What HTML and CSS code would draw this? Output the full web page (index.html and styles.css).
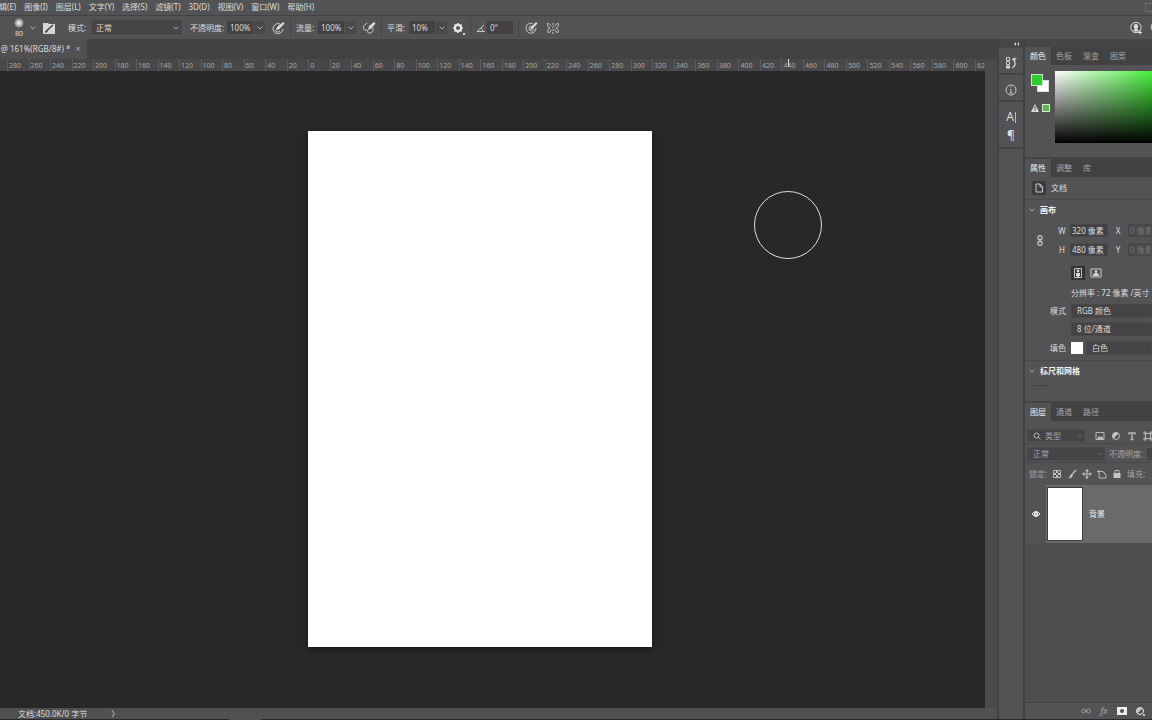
FILE: index.html
```html
<!DOCTYPE html>
<html lang="zh-CN">
<head>
<meta charset="utf-8">
<title>图像编辑器</title>
<link rel="stylesheet" href="styles.css">
</head>
<body>
<div class="app">
  <nav class="menubar">
    <button>编辑(E)</button><button>图像(I)</button><button>图层(L)</button><button>文字(Y)</button><button>选择(S)</button><button>滤镜(T)</button><button>3D(D)</button><button>视图(V)</button><button>窗口(W)</button><button>帮助(H)</button>
    <span class="window-box"></span>
  </nav>

  <div class="options">
    <button class="brush" aria-label="画笔"><span class="brush-dot"></span><span class="brush-size">80</span></button>
    <svg class="chev brush-chev" viewBox="0 0 8 8"><path d="M1.500 2.500 4 5 6.500 2.500"/></svg>
    <button class="icon brush-panel" aria-label="画笔设置"><svg viewBox="0 0 14 14"><path class="solid" d="M1 2h5l1 1h6v10H1z"/><path d="M3.500 11.500 6 8.500 11 4" stroke="#444" stroke-width="1.600"/><path d="M3 12l1-3 2 1z" fill="#444" stroke="none"/></svg></button>
    <label class="label mode-label" for="mode">模式:</label>
    <span class="select mode-select"><select id="mode"><option>正常</option></select><svg class="chev" viewBox="0 0 8 8"><path d="M1.500 2.500 4 5 6.500 2.500"/></svg></span>
    <label class="label opacity-label" for="opacity">不透明度:</label>
    <span class="num"><input id="opacity" value="100%"><button aria-label="不透明度选项"><svg class="chev" viewBox="0 0 8 8"><path d="M1.500 2.500 4 5 6.500 2.500"/></svg></button></span>
    <button class="icon after-num" aria-label="不透明度压力"><svg viewBox="0 0 14 14"><path d="M9 3a5 5 0 1 0 3 5M4 9a3 3 0 0 0 5 1"/><path class="solid" d="M5 9l1-3 6-5 1.500 1.500-5.500 6z"/></svg></button>
    <i class="sep"></i>
    <label class="label" for="flow">流量:</label>
    <span class="num"><input id="flow" value="100%"><button aria-label="流量选项"><svg class="chev" viewBox="0 0 8 8"><path d="M1.500 2.500 4 5 6.500 2.500"/></svg></button></span>
    <button class="icon after-num" aria-label="喷枪"><svg viewBox="0 0 14 14"><path d="M4 3C0 5 1 10 4 9s0 4 4 3 3-4 3-5M5 2 3 4"/><path class="solid" d="M6 9l1-4 5-4 1.500 1.500-4 5z"/></svg></button>
    <i class="sep"></i>
    <label class="label" for="smooth">平滑:</label>
    <span class="num"><input id="smooth" value="10%"><button aria-label="平滑选项"><svg class="chev" viewBox="0 0 8 8"><path d="M1.500 2.500 4 5 6.500 2.500"/></svg></button></span>
    <button class="icon gear" aria-label="平滑设置"><svg viewBox="0 0 14 14"><circle cx="7" cy="7" r="3" stroke="#eee" stroke-width="2"/><path d="M7 2v1.500M7 10.500v1.500M2 7h1.500M10.500 7H12M3.500 3.500l1 1M9.500 9.500l1 1M3.500 10.500l1-1M9.500 4.500l1-1" stroke="#eee" stroke-width="1.600"/><path class="solid" d="M12 12h2v2h-2z"/></svg></button>
    <i class="sep"></i>
    <label class="angle" for="angle" title="角度"><svg viewBox="0 0 10 10"><path d="M9 8.500H1L8 2M5 5q2 1 1.500 3.500"/></svg></label>
    <span class="num angle-num"><input id="angle" value="0°"></span>
    <i class="sep"></i>
    <button class="icon" aria-label="大小压力"><svg viewBox="0 0 14 14"><path d="M8.500 2.500A5 5 0 1 0 12 7M8 5a2.500 2.500 0 1 0 2 3"/><path class="solid" d="M6 8.500 7 6l5-5 1.500 1.500L8.500 8z"/></svg></button>
    <button class="icon symmetry" aria-label="对称"><svg viewBox="0 0 14 14"><path d="M7 2v11" stroke-dasharray="2 1"/><path d="M5 5C4 3 3 2.500 1.500 2.500c0 2.500.5 4 2.500 4.500-2 .5-2.500 2-2 4.500 2 0 3-1 3-3M9 5c1-2 2-2.500 3.500-2.500 0 2.500-.5 4-2.500 4.500 2 .5 2.500 2 2 4.500-2 0-3-1-3-3"/></svg></button>
    <span class="push"></span>
    <button class="icon" aria-label="分享"><svg viewBox="0 0 14 14"><circle cx="7" cy="6.500" r="5.200" stroke="#ddd"/><path class="solid" d="M7 3c3 0 2.500 4 1 5l2 1.500q-3 2.500-6 0L6 8C4.500 7 4 3 7 3z"/><path d="M9 11.500h4M11 9.500v4" stroke="#ddd"/></svg></button>
    <button class="icon search" aria-label="搜索"><svg viewBox="0 0 14 14"><circle cx="6" cy="6" r="4"/><path d="M9 9l4 4"/></svg></button>
  </div>

  <div class="workspace">
    <main class="document">
      <div class="doc-tabs"><div class="doc-tab"><span>1 @ 161%(RGB/8#) *</span><button aria-label="关闭">×</button></div></div>
      <div class="stage">
        <div class="view">
          <div class="ruler">
            <span>280</span><span>260</span><span>240</span><span>220</span><span>200</span><span>180</span><span>160</span><span>140</span><span>120</span><span>100</span><span>80</span><span>60</span><span>40</span><span>20</span><span>0</span><span>20</span><span>40</span><span>60</span><span>80</span><span>100</span><span>120</span><span>140</span><span>160</span><span>180</span><span>200</span><span>220</span><span>240</span><span>260</span><span>280</span><span>300</span><span>320</span><span>340</span><span>360</span><span>380</span><span>400</span><span>420</span><span>440</span><span>460</span><span>480</span><span>500</span><span>520</span><span>540</span><span>560</span><span>580</span><span>600</span><span>620</span>
            <i class="ruler-mark"></i>
          </div>
          <div class="canvas"><div class="artboard"></div><i class="cursor"></i></div>
        </div>
        <div class="scroll"></div>
      </div>
      <footer class="status"><span>文档:450.0K/0 字节</span><button aria-label="状态选项">〉</button></footer>
    </main>

    <aside class="strip">
      <button class="collapse" aria-label="展开面板"><svg viewBox="0 0 6 6"><path d="M3 1 1 3l2 2zM6 1 4 3l2 2z"/></svg></button>
      <div class="strip-group"><button aria-label="历史记录"><svg viewBox="0 0 14 14"><path d="M2.500 1.500h3v3h-3zM2.500 5.500h3v3h-3z"/><path class="solid" d="M2 9.500h4v3H2z"/><path d="M8 12q5-3 2-8" stroke-width="1.400"/><path class="solid" d="M7.500 3.500 11 1.500l.5 4z"/><path d="M10 2.500h2.500"/></svg></button></div>
      <div class="strip-group"><button aria-label="信息"><svg viewBox="0 0 14 14"><circle cx="7" cy="7" r="5"/><path d="M6 6.500h1v3.500M5.500 10h3M6.500 4h1" /></svg></button></div>
      <div class="strip-group tall"><button class="char" aria-label="字符">A<i></i></button><button class="char" aria-label="段落">¶</button></div>
      <div class="strip-rest"></div>
    </aside>

    <aside class="panels">
      <div class="panels-top"></div>
      <section class="panel">
        <div class="tabs"><button class="on">颜色</button><button>色板</button><button>渐变</button><button>图案</button></div>
        <div class="color-body">
          <div class="color-tools">
            <div class="swatches"><i class="back"></i><i class="fore"></i></div>
            <div class="warn"><svg viewBox="0 0 8 8"><path d="M4 0l4 8H0z" fill="#ddd"/><path d="M4 2.500v3M4 6v1" stroke="#444"/></svg><i></i></div>
          </div>
          <div class="spectrum"></div>
        </div>
      </section>

      <section class="panel">
        <div class="tabs"><button class="on">属性</button><button>调整</button><button>库</button></div>
        <div class="doc-row"><span class="doc-icon"><svg viewBox="0 0 10 10"><path d="M2 1h4l2.500 2.500V9H2zM6 1v3h2.500"/></svg></span>文档</div>
        <h2><svg class="chev" viewBox="0 0 8 8"><path d="M1.500 2.500 4 5 6.500 2.500"/></svg>画布</h2>
        <div class="size">
          <svg class="link" viewBox="0 0 8 12"><circle cx="4" cy="3.500" r="2"/><circle cx="4" cy="8.500" r="2"/><path d="M4 4v4"/></svg>
          <label for="w">W</label><input id="w" value="320 像素"><label for="x">X</label><input id="x" class="off" value="0 像素">
          <label for="h">H</label><input id="h" value="480 像素"><label for="y">Y</label><input id="y" class="off" value="0 像素">
        </div>
        <div class="orient"><button class="on" aria-label="纵向"><svg viewBox="0 0 12 12"><path d="M2.500 1.500h7v9h-7z"/><circle class="solid" cx="6" cy="4" r="1.400"/><path class="solid" d="M4 6h4v3H7v1H5V9H4z"/></svg></button><button aria-label="横向"><svg viewBox="0 0 12 12"><path d="M1 2h10v8H1z"/><circle class="solid" cx="6" cy="4.500" r="1.300"/><path class="solid" d="M3 9q0-3 3-3t3 3z"/></svg></button></div>
        <p class="resolution">分辨率 : 72 像素 /英寸</p>
        <div class="prop"><label for="cmode">模式</label><select id="cmode"><option>RGB 颜色</option></select></div>
        <div class="prop"><span></span><select aria-label="位深度"><option>8 位/通道</option></select></div>
        <div class="prop fill"><label for="fill">填色</label><i></i><select id="fill"><option>白色</option></select></div>
        <h2 class="grid-head"><svg class="chev" viewBox="0 0 8 8"><path d="M1.500 2.500 4 5 6.500 2.500"/></svg>标尺和网格</h2>
        <i class="cut"></i>
      </section>

      <section class="panel layers">
        <div class="tabs"><button class="on">图层</button><button>通道</button><button>路径</button></div>
        <div class="filter">
          <span class="select kind"><svg class="lens" viewBox="0 0 8 8"><circle cx="3.500" cy="3.500" r="2.500"/><path d="M5.500 5.500 7.500 7.500"/></svg><select aria-label="类型"><option>类型</option></select><svg class="chev" viewBox="0 0 8 8"><path d="M1.500 2.500 4 5 6.500 2.500"/></svg></span>
          <button aria-label="像素图层"><svg viewBox="0 0 10 10"><path d="M1 1.500h8v7H1z"/><path class="solid" d="M2 8l2-3 1.500 1.500L7 5l1.500 3z"/></svg></button>
          <button aria-label="调整图层"><svg viewBox="0 0 10 10"><circle cx="5" cy="5" r="3.500"/><path class="solid" d="M2.500 7.500 7.500 2.500A3.500 3.500 0 0 0 2.500 7.500z"/></svg></button>
          <button aria-label="文字图层"><svg viewBox="0 0 10 10"><path d="M2 3.500V2h6v1.500M5 2v6.500M3.500 8.500h3" stroke-width="1.400"/></svg></button>
          <button aria-label="形状图层"><svg viewBox="0 0 10 10"><path d="M2.500 2.500h5v5h-5zM1 1h2v2H1zM7 1h2v2H7zM1 7h2v2H1zM7 7h2v2H7z"/></svg></button>
        </div>
        <div class="blend"><span class="select"><select aria-label="混合模式"><option>正常</option></select><svg class="chev" viewBox="0 0 8 8"><path d="M1.500 2.500 4 5 6.500 2.500"/></svg></span><label for="lop">不透明度:</label><input id="lop"></div>
        <div class="locks">
          <span class="lock-label">锁定:</span>
          <button aria-label="锁定透明像素"><svg viewBox="0 0 10 10"><path d="M1.500 1.500h7v7h-7z"/><path class="solid" d="M4 2h2v2H4zM2 4h2v2H2zM6 4h2v2H6zM4 6h2v2H4z"/></svg></button>
          <button aria-label="锁定图像像素"><svg viewBox="0 0 10 10"><path d="M9 1 4.500 6" stroke-width="1.600"/><path class="solid" d="M4 5l2 2Q4 10 1 9q2-1 3-4z"/></svg></button>
          <button aria-label="锁定位置"><svg viewBox="0 0 10 10"><path d="M5 2v6M2 5h6"/><path class="solid" d="M5 0l2 2.500H3zM5 10 3 7.500h4zM0 5l2.500-2v4zM10 5 7.500 3v4z"/></svg></button>
          <button aria-label="锁定画板"><svg viewBox="0 0 10 10"><path d="M0 2.500h6L9 6v3H2V1M6 2.500 8 5"/></svg></button>
          <button aria-label="锁定全部"><svg viewBox="0 0 10 10"><path class="solid" d="M1.500 4h7v5h-7z"/><path d="M3 4V1.500h4V4"/></svg></button>
          <label for="lfill">填充:</label><input id="lfill">
        </div>
        <div class="layer">
          <button class="eye" aria-label="可见性"><svg viewBox="0 0 10 10"><path d="M1 5q4-5 8 0-4 5-8 0z"/><circle class="pupil" cx="5" cy="5" r="1.500"/></svg></button>
          <div class="layer-main"><i class="thumb"></i>背景</div>
        </div>
        <div class="layer-space"></div>
        <div class="layer-bar">
          <button class="dim" aria-label="链接图层"><svg viewBox="0 0 10 10"><circle cx="2.500" cy="5" r="2"/><circle cx="7.500" cy="5" r="2"/><path d="M3 5h4"/></svg></button>
          <button class="dim fx" aria-label="图层样式">fx</button>
          <button aria-label="添加蒙版"><svg viewBox="0 0 10 10"><path fill="#eee" fill-rule="evenodd" stroke="none" d="M0 1h10v8H0zM5 3a2 2 0 1 0 0 4 2 2 0 0 0 0-4z"/></svg></button>
          <button class="adjust" aria-label="调整图层"><svg viewBox="0 0 10 10"><circle cx="5" cy="5" r="3.500"/><path class="solid" d="M2.500 7.500 7.500 2.500A3.500 3.500 0 0 0 2.500 7.500zM8 8h2v2H8z"/></svg></button>
        </div>
      </section>
    </aside>
  </div>
  <div class="bottom-edge"><i></i></div>
</div>
</body>
</html>
```
FILE: styles.css
```css
* { box-sizing: border-box; }
body, h2, p { margin: 0; }
body {
  background: #535355;
  color: #dcdcdc;
  font: 8px/12px "Noto Sans", "Noto Sans CJK SC", sans-serif;
  overflow: hidden;
}
button, input, select {
  margin: 0;
  padding: 0;
  border: 0;
  border-radius: 0;
  background: none;
  color: inherit;
  font: inherit;
  appearance: none;
  min-width: 0;
}
button { display: flex; align-items: center; justify-content: center; white-space: nowrap; }
svg { display: block; fill: none; stroke: #c9c9c9; stroke-width: 1; width: 10px; height: 10px; flex: none; }
svg .solid { fill: #d8d8d8; stroke: none; }
.chev { width: 8px; height: 8px; stroke: #aaa; }
i { display: block; flex: none; }

.app { display: grid; grid-template-rows: 15px 24px minmax(0, 1fr) 1px; height: 100vh; overflow: hidden; }

.menubar { display: flex; align-items: center; gap: 8px; height: 14px; margin-left: -9px; overflow: hidden; }
.menubar button { flex: none; }
.window-box { flex: none; width: 7px; height: 9px; margin-left: auto; border: 1px solid #6d6d6f; border-right: 0; }

.options { display: flex; align-items: center; border-top: 1px solid #424244; padding-left: 12px; overflow: hidden; }
.options > * { flex: none; }
.options .icon svg { width: 14px; height: 14px; }
.brush { width: 14px; flex-direction: column; font-size: 7px; line-height: 8px; }
.brush-dot { width: 10px; height: 10px; margin-bottom: 2px; border-radius: 50%; background: radial-gradient(#fff, #aaa 45%, #535355 75%); }
.brush-chev { margin-left: 3px; }
.brush-panel { margin-left: 5px; }
.mode-label { margin-left: 12px; }
.label { width: 22px; white-space: nowrap; }
.opacity-label { width: 37px; margin-left: 8px; }
.select { display: flex; align-items: center; background: #464446; border: 1px solid #4b494b; }
.select select { flex: 1; }
.mode-select { width: 91px; height: 15px; margin-left: 1px; padding: 0 1px 0 4px; }
.num { display: flex; gap: 1px; height: 13px; width: 38px; }
.num input { flex: 1; background: #434143; padding-left: 3px; }
.num button { width: 11px; background: #4a484a; }
.after-num { margin-left: 6px; }
.sep { width: 1px; height: 18px; margin: 0 5px; background: #47474a; }
.gear { margin-left: 4px; }
.angle-num { width: 26px; margin-left: 1px; }
.symmetry { margin-left: 8px; }
.push { flex: 1 1 0; }
.search { width: 14px; margin: 0 -11px 0 6px; }

.workspace { display: grid; grid-template-columns: minmax(0, 1fr) 28px 127px; min-height: 0; }
.document { display: flex; flex-direction: column; min-width: 0; background: #424243; }
.doc-tabs { display: flex; height: 20px; }
.doc-tab { display: flex; align-items: center; gap: 5px; margin-left: -6px; padding-right: 7px; background: #505052; white-space: nowrap; }
.doc-tab button { color: #aaa; font-size: 9px; }
.stage { display: flex; flex: 1; min-height: 0; }
.view { display: flex; flex-direction: column; flex: 1; min-width: 0; }
.ruler {
  position: relative;
  display: grid;
  grid-template-columns: repeat(45, minmax(0, 1fr)) 10px;
  height: 12px;
  padding-left: 7px;
  background: #48484a;
  overflow: hidden;
}
.ruler span {
  padding: 1px 0 0 1px;
  border-left: 1px solid #5c5c5e;
  color: #a6a6a8;
  font-size: 7px;
  line-height: 12px;
  background: repeating-linear-gradient(90deg, transparent 0 4px, #6a6a6c 4px 5px) bottom / 100% 1px no-repeat;
}
.ruler-mark { position: absolute; left: 788px; top: 0; width: 1px; height: 8px; background: #ddd; }
.canvas { position: relative; display: flex; align-items: center; justify-content: center; flex: 1; padding: 0 25px 2px 0; background: #28282a; overflow: hidden; }
.artboard { width: 344px; height: 516px; background: #fff; box-shadow: 0 2px 6px #151516; }
.cursor { position: absolute; left: 754px; top: 120px; width: 68px; height: 68px; border: 1px solid #dedede; border-radius: 50%; }
.scroll { width: 12px; background: #4b4b4d; }
.status { display: flex; align-items: center; gap: 24px; height: 11px; padding-left: 18px; background: #505052; }

.strip { display: flex; flex-direction: column; border: solid #424143; border-width: 0 2px; background: #535355; }
.collapse { height: 9px; padding-right: 4px; justify-content: flex-end; background: #464648; }
.collapse svg { width: 6px; height: 6px; fill: #ccc; stroke: none; }
.strip-group { display: flex; flex-direction: column; align-items: center; gap: 5px; height: 27px; padding-top: 8px; border-bottom: 2px solid #444446; }
.strip-group svg { width: 14px; height: 14px; }
.strip-group.tall { height: 47px; }
.char { height: 14px; font-size: 12px; line-height: 14px; }
.char i { width: 1px; height: 11px; margin-left: 1px; background: #bbb; }
.strip-rest { flex: 1; }

.panels { display: flex; flex-direction: column; min-width: 0; overflow: hidden; background: #535355; }
.panels-top { height: 8px; background: #464648; }
.panel { border-bottom: 2px solid #444446; }
.tabs { display: flex; height: 18px; background: #424243; color: #a4a4a6; }
.tabs button { flex: none; padding: 0 5px; margin-right: 1px; }
.tabs .on { margin-right: 0; background: #535355; color: #eee; }

.color-body { display: flex; height: 92px; padding-top: 6px; }
.color-tools { width: 30px; padding: 3px 0 0 6px; flex: none; }
.swatches { display: grid; grid-template: repeat(3, 6px) / repeat(3, 6px); }
.swatches i { border: 1px solid #ddd; }
.fore { grid-area: 1 / 1 / 3 / 3; background: #2bd12b; }
.back { grid-area: 2 / 2 / 4 / 4; background: #fff; }
.warn { display: flex; gap: 3px; align-items: center; margin-top: 12px; }
.warn svg { width: 8px; height: 8px; stroke: none; }
.warn i { width: 8px; height: 8px; border: 1px solid #d5e8d0; background: #5eb548; }
.spectrum { flex: 1; height: 72px; background: linear-gradient(transparent, #000), linear-gradient(90deg, #fff, #46f03a); }

.doc-row { display: flex; align-items: center; gap: 5px; height: 23px; padding-left: 7px; border-bottom: 1px solid #48484a; }
.doc-icon { padding: 2px; background: #3b3b3d; }
.panel h2 { display: flex; align-items: center; gap: 4px; height: 20px; padding-left: 3px; color: #f2f2f2; font-size: 8px; font-weight: 700; }
.size { display: grid; grid-template-columns: 24px 16px 38px 20px 1fr; row-gap: 6px; align-items: center; padding: 4px 0 0 5px; text-align: center; }
.size .link { grid-row: span 2; width: 10px; height: 13px; margin-left: 5px; }
.size input { height: 13px; width: 100%; padding-left: 1px; background: #434143; border: 1px solid #49474a; }
.size .off { color: #747476; background: #4b494b; }
.orient { display: flex; gap: 4px; padding: 10px 0 0 46px; }
.orient button { padding: 1px; }
.orient svg { width: 12px; height: 12px; }
.orient .on { background: #333335; }
.resolution { padding: 7px 0 3px 46px; white-space: nowrap; }
.prop { display: flex; align-items: center; height: 18px; }
.prop label, .prop span { width: 46px; padding-left: 25px; }
.prop select { flex: 1; height: 14px; padding-left: 5px; background: #454345; border: 1px solid #4a484a; }
.prop.fill { margin-top: 1px; }
.prop i { width: 12px; height: 12px; margin-right: 3px; background: #fff; }
.panel .grid-head { margin-top: 3px; border-top: 1px solid #48484a; }
.cut { width: 16px; height: 1px; margin: 5px 0 15px 8px; background: #444446; }

.layers { display: flex; flex-direction: column; flex: 1; min-height: 0; border: 0; color: #a4a4a6; }
.filter { display: flex; align-items: center; gap: 6px; height: 23px; padding: 7px 0 0 2px; border-bottom: 1px solid #48484a; }
.layers svg { stroke: #b8b8ba; }
.layers .solid { fill: #c4c4c6; stroke: none; }
.filter button, .locks button { width: 10px; flex: none; }
.filter .kind { width: 58px; height: 13px; margin-right: 4px; padding-left: 5px; gap: 4px; flex: none; }
.lens { width: 8px; height: 8px; }
.layers .select .chev { stroke: #68686a; }
.blend { display: flex; align-items: center; height: 19px; padding: 2px 0 0 2px; border-bottom: 1px solid #48484a; white-space: nowrap; }
.blend .select { flex: none; width: 78px; height: 14px; margin-right: 4px; padding-left: 5px; }
.blend input, .locks input { width: 20px; height: 12px; background: #454345; margin-left: 4px; }
.blend label, .locks label { flex: none; }
.locks { display: flex; align-items: center; gap: 5px; height: 22px; padding-left: 4px; white-space: nowrap; }
.lock-label { flex: none; width: 18px; }
.layer { display: flex; height: 58px; flex: none; }
.eye { width: 21px; }
.layer .eye svg { stroke: #eee; }
.eye .pupil { fill: #535355; stroke-width: 1.500; }
.layer-main { display: flex; flex: 1; align-items: center; gap: 6px; padding-left: 1px; background: #6a6a6a; color: #eee; }
.thumb { width: 36px; height: 54px; background: #fff; border: 1px solid #3c3c3c; }
.layer-space { flex: 1; background: #504d50; border-bottom: 1px solid #434143; }
.layer-bar { display: flex; align-items: center; justify-content: flex-end; gap: 8px; height: 16px; padding-right: 7px; }
.layer-bar button { width: 10px; }
.layer-bar .fx { font-style: italic; font-size: 9px; }
.layer-bar .dim svg { stroke: #929294; }
.layer-bar .adjust svg { stroke: #eee; }

.bottom-edge { background: #29292b; padding-left: 229px; }
.bottom-edge i { width: 32px; height: 1px; background: #505052; }
```
